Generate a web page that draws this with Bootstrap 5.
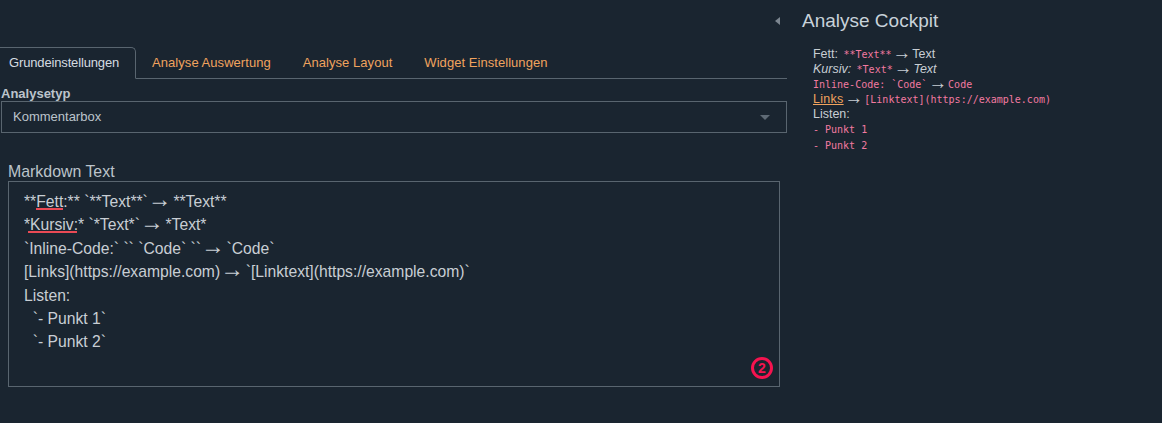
<!DOCTYPE html>
<html lang="de">
<head>
    <meta charset="UTF-8">
    <meta name="viewport" content="width=device-width, initial-scale=1.0">
    <title>Analyse Cockpit</title>
    <link href="https://cdn.jsdelivr.net/npm/bootstrap@5.3.0/dist/css/bootstrap.min.css" rel="stylesheet">
    <style>
        html, body {
            height: 100%;
        }
        body {
            background-color: #1a2530;
            color: #c8ced4;
            font-family: "Liberation Sans", Arial, sans-serif;
            overflow: hidden;
        }
        .page-wrap {
            height: 423px;
        }
        .left-pane {
            width: 786px;
            margin-left: 1px;
            padding-top: 47px;
        }
        .top-tabs {
            margin-left: -8px;
            border-bottom: 1px solid #59656f;
            font-size: 13px;
        }
        .top-tabs .nav-link {
            height: 32px;
            padding: 7px 15px 0;
            margin: 0 0 -1px 0;
            line-height: 15px;
            letter-spacing: .05px;
            color: #f0a35e;
            background: transparent;
            border: 1px solid transparent;
            border-radius: 5px 5px 0 0;
        }
        .top-tabs .nav-link.active {
            padding-right: 16px;
            letter-spacing: -.15px;
            color: #d5dbe0;
            background: #1a2530;
            border-color: #59656f #59656f #1a2530;
        }
        .type-label {
            font-size: 13px;
            font-weight: 700;
            line-height: 15px;
            margin: 7px 0 0 0;
            color: #bcc4cb;
            display: block;
        }
        .type-select {
            height: 32px;
            padding: 0 0 0 11px;
            font-size: 13px;
            color: #bcc4cb;
            background: transparent;
            border: 1px solid #59656f;
            border-radius: 0;
        }
        .caret-down {
            width: 0;
            height: 0;
            margin-right: 16px;
            border-left: 5px solid transparent;
            border-right: 5px solid transparent;
            border-top: 5px solid #5e6a75;
        }
        .md-block {
            width: 772px;
            margin: 29px 0 0 7px;
        }
        .md-label {
            font-size: 15.9px;
            line-height: 19px;
            color: #bcc4cb;
            display: block;
        }
        .md-area {
            height: 206px;
            padding: 8px 15px;
            font-size: 15.7px;
            line-height: 23.4px;
            color: #c8ced4;
            background: transparent;
            border: 1px solid #59656f;
            border-radius: 0;
            white-space: pre-wrap;
        }
        .spell-err {
            position: relative;
        }
        .spell-err::after {
            content: "";
            position: absolute;
            left: 0;
            right: 0;
            bottom: 0;
            height: 2px;
            background: #ea4a55;
        }
        .spell-wide::after {
            left: -2px;
            right: -3px;
        }
        .long-arrow {
            font-size: 1.5em;
            line-height: 0;
            margin-right: 2px;
        }
        .count-badge {
            position: absolute;
            right: 7px;
            bottom: 8px;
            width: 22px;
            height: 22px;
            border: 3px solid #f5134f;
            border-radius: 50%;
            color: #f5134f;
            font-size: 14px;
            font-weight: 700;
            line-height: 16px;
            text-align: center;
        }
        .collapse-caret {
            width: 0;
            height: 0;
            margin: 17px 0 0 -12px;
            border-top: 4px solid transparent;
            border-bottom: 4px solid transparent;
            border-right: 5px solid #7c8690;
        }
        .right-pane {
            margin-left: 22px;
            padding-top: 10px;
        }
        .cockpit-title {
            font-size: 19px;
            font-weight: 400;
            line-height: 21px;
            margin: 0 0 16px 0;
            color: #c8d2da;
        }
        .help-list {
            margin-left: 11px;
            font-size: 12.48px;
            line-height: 15.1px;
            color: #c8ced4;
        }
        .help-list code {
            font-family: "DejaVu Sans Mono", "Liberation Mono", monospace;
            font-size: 10px;
            color: #f27aa0;
        }
        .help-list .code-gap {
            margin-left: 2px;
        }
        .help-list .long-arrow {
            margin: 0 1px;
            vertical-align: -1px;
        }
        .help-list a {
            letter-spacing: .3px;
            color: #f0a35e;
        }
    </style>
</head>
<body>
    <div class="page-wrap d-flex">
        <div class="left-pane flex-shrink-0">
            <ul class="nav nav-tabs top-tabs">
                <li class="nav-item"><a class="nav-link active" href="#">Grundeinstellungen</a></li>
                <li class="nav-item"><a class="nav-link" href="#">Analyse Auswertung</a></li>
                <li class="nav-item"><a class="nav-link" href="#">Analyse Layout</a></li>
                <li class="nav-item"><a class="nav-link" href="#">Widget Einstellungen</a></li>
            </ul>
            <label class="type-label">Analysetyp</label>
            <div class="type-select d-flex align-items-center justify-content-between">
                <span>Kommentarbox</span>
                <span class="caret-down"></span>
            </div>
            <div class="md-block">
                <label class="md-label">Markdown Text</label>
                <div class="position-relative">
                    <div class="md-area">**<span class="spell-err">Fett</span>:** `**Text**`<span class="long-arrow">→</span>**Text**
*<span class="spell-err spell-wide">Kursiv</span>:* `*Text*`<span class="long-arrow">→</span>*Text*
`Inline-Code:` `` `Code` ``<span class="long-arrow">→</span>`Code`
[Links](https://example.com)<span class="long-arrow">→</span>`[Linktext](https://example.com)`
Listen:
  `- Punkt 1`
  `- Punkt 2`</div>
                    <span class="count-badge">2</span>
                </div>
            </div>
        </div>
        <div class="collapse-caret flex-shrink-0"></div>
        <div class="right-pane flex-grow-1">
            <h5 class="cockpit-title">Analyse Cockpit</h5>
            <div class="help-list">
                <div>Fett: <code class="code-gap">**Text**</code><span class="long-arrow">→</span>Text</div>
                <div><em>Kursiv:</em> <code class="code-gap">*Text*</code><span class="long-arrow">→</span><em>Text</em></div>
                <div><code>Inline-Code: `Code`</code><span class="long-arrow">→</span><code>Code</code></div>
                <div><a href="#">Links</a><span class="long-arrow">→</span><code>[Linktext](https://example.com)</code></div>
                <div>Listen:</div>
                <div><code>- Punkt 1</code></div>
                <div><code>- Punkt 2</code></div>
            </div>
        </div>
    </div>
    <script src="https://cdn.jsdelivr.net/npm/bootstrap@5.3.0/dist/js/bootstrap.bundle.min.js"></script>
</body>
</html>
